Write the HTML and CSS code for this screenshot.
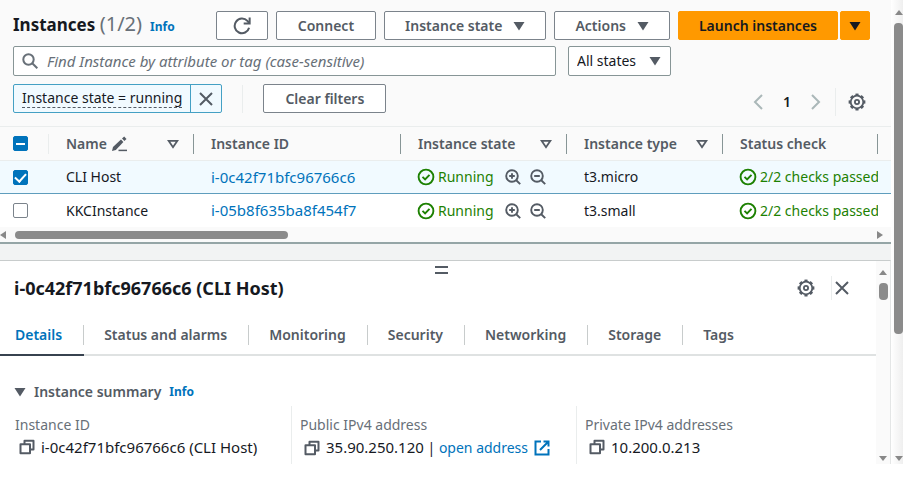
FILE: index.html
```html
<!DOCTYPE html>
<html lang="en">
<head>
<meta charset="utf-8">
<title>Instances</title>
<link rel="stylesheet" href="styles.css">
</head>
<body>
<svg class="defs" aria-hidden="true">
  <symbol id="caret" viewBox="0 0 12 10"><path d="M0.5 1h11L6 9.500z" fill="currentColor"/></symbol>
  <symbol id="sort" viewBox="0 0 12 10"><path d="M1.600 1.800h8.800L6 8.200z" fill="none" stroke="currentColor" stroke-width="1.800"/></symbol>
  <symbol id="close" viewBox="0 0 16 16"><path d="M2 2l12 12M14 2L2 14" fill="none" stroke="currentColor" stroke-width="2"/></symbol>
  <symbol id="gear" viewBox="0 0 18 18"><g fill="none" stroke="currentColor"><circle cx="9" cy="9" r="6.300" stroke-width="1.800"/><circle cx="9" cy="9" r="7.500" stroke-width="1.800" pathLength="32" stroke-dasharray="2.200 1.800" stroke-dashoffset="1.100"/><circle cx="9" cy="9" r="2.100" stroke-width="1.800"/></g></symbol>
  <symbol id="ok" viewBox="0 0 18 18"><g fill="none" stroke="currentColor" stroke-width="1.900"><circle cx="9" cy="9" r="7.400"/><path d="M5.500 8.900l2.600 2.600 4.400-4.700"/></g></symbol>
  <symbol id="zoom-in" viewBox="0 0 16 16"><g fill="none" stroke="currentColor" stroke-width="1.900"><circle cx="7" cy="7" r="5.800"/><path d="M11 11l4.200 4.200M4.200 7h5.600M7 4.200v5.600"/></g></symbol>
  <symbol id="zoom-out" viewBox="0 0 16 16"><g fill="none" stroke="currentColor" stroke-width="1.900"><circle cx="7" cy="7" r="5.800"/><path d="M11 11l4.200 4.200M4.200 7h5.600"/></g></symbol>
  <symbol id="copy" viewBox="0 0 16 16"><g fill="none" stroke="currentColor" stroke-width="2" stroke-linejoin="round"><path d="M5.500 5V1.800h9v8.700H11"/><path d="M1.500 5.300H11v9H1.500z"/></g></symbol>
</svg>
<div class="app">
  <main class="content">
    <section class="instances">
      <header class="bar title-bar">
        <h1>Instances <span class="count">(1/2)</span></h1>
        <a class="info" href="#">Info</a>
        <div class="actions">
          <button class="btn btn-icon" aria-label="Refresh"><svg class="i18" viewBox="0 0 16 16"><g fill="none" stroke="currentColor" stroke-width="1.800"><path d="M14.300 9.500A6.500 6.500 0 1 1 12.800 3.500L14.500 5.500"/><path d="M14.800 0.500V5.800H9.500"/></g></svg></button>
          <button class="btn wide">Connect</button>
          <button class="btn">Instance state <svg class="tri"><use href="#caret"/></svg></button>
          <button class="btn">Actions <svg class="tri"><use href="#caret"/></svg></button>
          <div class="split">
            <button class="btn primary">Launch instances</button>
            <button class="btn primary more" aria-label="More launch options"><svg class="tri"><use href="#caret"/></svg></button>
          </div>
        </div>
      </header>
      <div class="bar search-bar">
        <label class="search">
          <svg class="i16" viewBox="0 0 16 16"><g fill="none" stroke="currentColor" stroke-width="2"><circle cx="6.500" cy="6.500" r="5.200"/><path d="M10 10l5.300 5.300"/></g></svg>
          <input type="text" aria-label="Find instances" placeholder="Find Instance by attribute or tag (case-sensitive)">
        </label>
        <div class="select">
          <select aria-label="State"><option>All states</option></select>
          <svg class="tri"><use href="#caret"/></svg>
        </div>
      </div>
      <div class="bar filter-bar">
        <div class="token"><button class="token-text"><span>Instance state = running</span></button><button class="token-x" aria-label="Remove filter"><svg class="i16"><use href="#close"/></svg></button></div>
        <span class="rule"></span>
        <button class="btn wide">Clear filters</button>
        <nav class="pages" aria-label="Pages">
          <button class="plain dim" aria-label="Previous page"><svg class="chev" viewBox="0 0 10 16"><path d="M9 1L2 8l7 7" fill="none" stroke="currentColor" stroke-width="2"/></svg></button>
          <button class="plain page">1</button>
          <button class="plain dim" aria-label="Next page"><svg class="chev" viewBox="0 0 10 16"><path d="M1 1l7 7-7 7" fill="none" stroke="currentColor" stroke-width="2"/></svg></button>
          <span class="rule"></span>
          <button class="plain" aria-label="Preferences"><svg class="i18"><use href="#gear"/></svg></button>
        </nav>
      </div>
      <table>
        <colgroup><col class="c-check"><col class="c-name"><col class="c-id"><col class="c-state"><col class="c-type"><col class="c-status"><col></colgroup>
        <thead>
          <tr>
            <th class="light"><div><input type="checkbox" class="some" aria-label="Select all"></div></th>
            <th><div>Name <svg class="i16 edit" viewBox="0 0 16 16"><path d="M1 15l1-4L10 3.600l2.400 2.400L4.800 14z" fill="currentColor"/><path d="M11 2.600L13.200.6l2.300 2.300-2.100 2.100z" fill="currentColor"/><path d="M7.500 14.400H16" stroke="currentColor" stroke-width="1.500"/></svg><svg class="tri sort"><use href="#sort"/></svg></div></th>
            <th><div>Instance ID</div></th>
            <th><div>Instance state <svg class="tri sort"><use href="#sort"/></svg></div></th>
            <th><div>Instance type <svg class="tri sort"><use href="#sort"/></svg></div></th>
            <th><div>Status check</div></th>
            <th class="last"></th>
          </tr>
        </thead>
        <tbody>
          <tr class="selected">
            <td><input type="checkbox" checked aria-label="Select CLI Host"></td>
            <td>CLI Host</td>
            <td><a class="value" href="#">i-0c42f71bfc96766c6</a></td>
            <td><div class="state"><svg class="i18"><use href="#ok"/></svg><span>Running</span><button class="plain" aria-label="Filter in"><svg class="i16"><use href="#zoom-in"/></svg></button><button class="plain" aria-label="Filter out"><svg class="i16"><use href="#zoom-out"/></svg></button></div></td>
            <td>t3.micro</td>
            <td><div class="state"><svg class="i18"><use href="#ok"/></svg><span>2/2 checks passed</span></div></td>
            <td></td>
          </tr>
          <tr>
            <td><input type="checkbox" aria-label="Select KKCInstance"></td>
            <td>KKCInstance</td>
            <td><a class="value" href="#">i-05b8f635ba8f454f7</a></td>
            <td><div class="state"><svg class="i18"><use href="#ok"/></svg><span>Running</span><button class="plain" aria-label="Filter in"><svg class="i16"><use href="#zoom-in"/></svg></button><button class="plain" aria-label="Filter out"><svg class="i16"><use href="#zoom-out"/></svg></button></div></td>
            <td>t3.small</td>
            <td><div class="state"><svg class="i18"><use href="#ok"/></svg><span>2/2 checks passed</span></div></td>
            <td></td>
          </tr>
        </tbody>
      </table>
      <div class="hscroll"><i class="arrow left"></i><div class="track"><div class="thumb"></div></div><i class="arrow right"></i></div>
    </section>
    <section class="panel">
      <div class="panel-main">
        <div class="grip"></div>
        <header class="panel-head">
          <h2>i-0c42f71bfc96766c6 (CLI Host)</h2>
          <button class="plain" aria-label="Panel preferences"><svg class="i18"><use href="#gear"/></svg></button>
          <span class="rule"></span>
          <button class="plain" aria-label="Close panel"><svg class="i16"><use href="#close"/></svg></button>
        </header>
        <nav class="tabs">
          <a class="active" href="#"><span>Details</span></a><a href="#"><span>Status and alarms</span></a><a href="#"><span>Monitoring</span></a><a href="#"><span>Security</span></a><a href="#"><span>Networking</span></a><a href="#"><span>Storage</span></a><a href="#"><span>Tags</span></a>
        </nav>
        <div class="summary">
          <svg class="tri"><use href="#caret"/></svg>
          <h3>Instance summary</h3>
          <a class="info" href="#">Info</a>
        </div>
        <dl>
          <div><dt>Instance ID</dt><dd><svg class="i16"><use href="#copy"/></svg><span class="value">i-0c42f71bfc96766c6 (CLI Host)</span></dd></div>
          <div><dt>Public IPv4 address</dt><dd><svg class="i16"><use href="#copy"/></svg><span><span class="value">35.90.250.120</span> | <a href="#">open address</a></span><svg class="i16 ext" viewBox="0 0 16 16"><path d="M7 1.500H1.500v13h13V9M9.500 1.500h5v5M14.500 1.500L6 10" fill="none" stroke="currentColor" stroke-width="2"/></svg></dd></div>
          <div><dt>Private IPv4 addresses</dt><dd><svg class="i16"><use href="#copy"/></svg><span class="value">10.200.0.213</span></dd></div>
        </dl>
      </div>
      <div class="vscroll inner"><i class="arrow up"></i><div class="thumb"></div><i class="arrow down"></i></div>
    </section>
  </main>
  <div class="vscroll outer"><i class="arrow up"></i><div class="thumb"></div><i class="arrow down"></i></div>
</div>
</body>
</html>
```
FILE: styles.css
```css
* { box-sizing: border-box; }
body {
  margin: 0;
  background: #fff;
  color: #16191f;
  font: 14px/20px "Noto Sans", "Open Sans", sans-serif;
}
button, input, select { font: inherit; color: inherit; margin: 0; }
h1, h2, h3, dl, dd { margin: 0; }
a { color: #0073bb; text-decoration: none; }
svg { flex: none; display: block; }
.defs { position: absolute; width: 0; height: 0; }
.i16 { width: 16px; height: 16px; }
.i18 { width: 18px; height: 18px; }
.tri { width: 12px; height: 10px; color: #545b64; }
.value { font-size: 15px; }

.app { display: flex; height: calc(100vh - 16px); margin-right: 12px; }
.content { flex: 1; min-width: 0; display: flex; flex-direction: column; background: #f2f3f3; }
.instances { background: #fafafa; border-bottom: 2px solid #95a5a6; padding-top: 11px; }

.bar { display: flex; align-items: center; padding: 0 21px 0 13px; }
.title-bar { height: 29px; align-items: baseline; }
h1 { font-size: 17px; line-height: 26px; font-weight: 700; white-space: nowrap; }
.count { font-size: 20px; font-weight: 400; color: #687078; }
.info { font-size: 12px; font-weight: 700; margin-left: 8px; }
.actions { margin-left: auto; display: flex; gap: 8px; align-self: center; }
.btn {
  height: 29px;
  display: flex;
  align-items: center;
  gap: 11px;
  padding: 0 20px;
  border: 1px solid #7b838b;
  border-radius: 2px;
  background: #fff;
  color: #545b64;
  font-weight: 600;
  white-space: nowrap;
}
.btn-icon { padding: 0 16px; }
.wide { padding: 0 21px; }
.split { display: flex; gap: 2px; }
.primary { background: #ff9900; border-color: #ff9900; color: #16191f; }
.more { padding: 0 8px; }
.primary .tri { color: #16191f; }

.search-bar { gap: 12px; padding-top: 6px; }
.search {
  flex: 0 1 543px;
  height: 30px;
  display: flex;
  align-items: center;
  gap: 9px;
  padding: 0 8px;
  border: 1px solid #879596;
  border-radius: 2px;
  background: #fff;
  color: #687078;
  font-size: 15px;
}
.search input { flex: 1; min-width: 0; border: 0; padding: 0; background: none; outline: 0; }
.search input::placeholder { color: #687078; font-style: italic; opacity: 1; }
.select { display: grid; align-items: center; }
.select > * { grid-area: 1 / 1; }
.select select {
  appearance: none;
  width: 103px;
  height: 30px;
  padding: 0 8px;
  border: 1px solid #879596;
  border-radius: 2px;
  background: #fff;
}
.select .tri { justify-self: end; margin-right: 10px; pointer-events: none; }

.filter-bar { padding-top: 8px; padding-bottom: 13px; height: 50px; }
.token { display: flex; height: 29px; border: 1px solid #44a0c4; border-radius: 2px; background: #f1faff; }
.token button { border: 0; background: none; display: flex; align-items: center; padding: 0 8px; }
.token-text span { border-bottom: 1px dashed #545b64; line-height: 18px; white-space: nowrap; }
.token .token-x { border-left: 1px solid #44a0c4; padding: 0 7px; color: #545b64; }
.rule { width: 1px; height: 28px; background: #eaeded; margin: 0 20px; }
.pages { margin-left: auto; display: flex; align-items: center; align-self: flex-end; height: 22px; padding-right: 4px; }
.plain { border: 0; background: none; padding: 0; color: #545b64; display: flex; align-items: center; }
.dim { color: #aab7b8; }
.chev { width: 10px; height: 16px; }
.page { color: #16191f; font-weight: 600; margin: 0 20px; }
.pages .rule { margin: 0 12px 0 14px; }

table { width: 100%; table-layout: fixed; border-collapse: separate; border-spacing: 0; border-top: 1px solid #eaeded; }
.c-check { width: 49px; }
.c-name { width: 145px; }
.c-id { width: 207px; }
.c-state { width: 166px; }
.c-type { width: 156px; }
.c-status { width: 155px; }
th { height: 34px; padding: 0; text-align: left; color: #545b64; font-weight: 600; border-bottom: 1px solid #eaeded; }
th div { display: flex; align-items: center; height: 20px; padding-left: 17px; border-right: 1px solid #879596; white-space: nowrap; }
th.light div { border-color: #eaeded; padding-left: 13px; }
th .sort { margin-left: auto; margin-right: 14px; }
.edit { margin-left: 4px; }
td { height: 33px; padding: 0 0 0 17px; overflow: hidden; white-space: nowrap; background: #fff; }
td:first-child { padding-left: 13px; }
.selected td { background: #f1faff; border-bottom: 1px solid #5f9dbd; }
.state { display: flex; align-items: center; color: #1d8102; gap: 3px; margin-left: -1px; }
.state .plain { margin-left: 6px; }
.state span + .plain { margin-left: 8px; }
input[type="checkbox"] {
  appearance: none;
  display: grid;
  place-items: center;
  width: 15px;
  height: 15px;
  border: 1px solid #7b838b;
  border-radius: 2px;
  background: #fff;
}
input.some, input[type="checkbox"]:checked { background: #0073bb; border-color: #0073bb; }
input.some::after { content: ""; width: 9px; height: 2px; background: #fff; }
input:checked::after {
  content: "";
  width: 5px;
  height: 9px;
  margin-bottom: 2px;
  border: solid #fff;
  border-width: 0 2px 2px 0;
  transform: rotate(42deg);
}

.arrow { width: 0; height: 0; border: 4px solid transparent; flex: none; }
.arrow.left { border-left-width: 0; border-right: 6px solid #888; }
.arrow.right { border-right-width: 0; border-left: 6px solid #888; }
.arrow.up { border-top-width: 0; border-bottom: 5px solid #888; }
.arrow.down { border-bottom-width: 0; border-top: 5px solid #888; }
.hscroll { display: flex; align-items: center; height: 15px; padding-right: 8px; gap: 9px; }
.track { flex: 1; }
.thumb { background: #8b8b8b; border-radius: 4px; }
.track .thumb { width: 32%; height: 8px; }

.panel { flex: 1; min-height: 0; margin-top: 16px; display: flex; background: #fff; border-top: 1px solid #c8cccc; border-right: 1px solid #e4e6e6; }
.panel-main { flex: 1; min-width: 0; }
.grip { width: 13px; height: 8px; margin: 5px auto 0 calc(50% - 3px); border: solid #545b64; border-width: 2px 0; }
.panel-head { display: flex; align-items: center; padding: 0 26px 0 14px; height: 28px; }
h2 { font-size: 18px; line-height: 24px; font-weight: 700; margin-right: auto; }
.panel-head .rule { margin: 0 2px 0 16px; height: 24px; }
.tabs { display: flex; margin-top: 11px; border-bottom: 2px solid #dfe2e2; }
.tabs a { padding: 12px 0 9px; margin-bottom: -2px; color: #545b64; font-weight: 600; white-space: nowrap; border-bottom: 2px solid transparent; }
.tabs span { display: block; padding: 0 21px 0 20px; border-right: 1px solid #c8cccc; }
.tabs a:first-child span { padding-left: 15px; }
.tabs a:last-child span { border: 0; }
.tabs .active { color: #0073bb; border-color: #37424f; }
.summary { display: flex; align-items: center; padding: 26px 14px 4px; }
h3 { font-size: 14px; font-weight: 600; color: #545b64; margin-left: 8px; }
dl { display: grid; grid-template-columns: repeat(3, 1fr); padding: 0 15px 0 6px; }
dl > div { padding: 9px 0 6px 8px; border-left: 1px solid #eaeded; }
dl > div:first-child { border-color: transparent; }
dt { color: #687078; }
dd { display: flex; align-items: center; gap: 6px; padding: 2px 0 0 4px; white-space: nowrap; }
dd .i16 { color: #545b64; }
dd .ext { color: #0073bb; }

.vscroll { display: flex; flex-direction: column; align-items: center; flex: none; }
.vscroll .down { margin-top: auto; }
.inner { width: 14px; padding: 9px 0 3px; background: #fafafa; }
.inner .thumb { width: 9px; height: 17px; margin-top: 8px; }
.outer { width: 12px; padding: 10px 0 3px; align-items: flex-end; background: linear-gradient(90deg, #fff, #efefef); }
.outer .thumb { width: 9px; height: 69%; margin-top: 8px; }
```
